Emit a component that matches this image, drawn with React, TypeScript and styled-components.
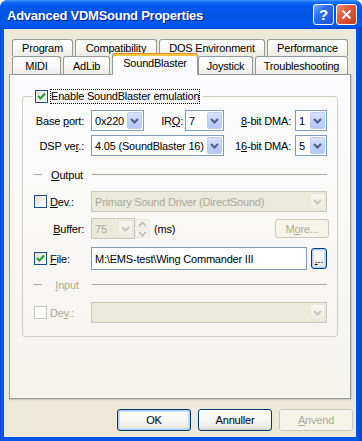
import styled, { createGlobalStyle } from 'styled-components';

const GlobalStyle = createGlobalStyle`
  html, body {
    margin: 0;
    padding: 0;
    background: #ffffff;
  }
  body {
    font-family: "Liberation Sans", Arial, sans-serif;
    font-size: 11px;
    letter-spacing: -0.2px;
    color: #000000;
  }
`;

const backTabs = [
  { label: 'Program', width: 61 },
  { label: 'Compatibility', width: 82 },
  { label: 'DOS Environment', width: 106 },
  { label: 'Performance', width: 81 },
];

const frontTabs = [
  { label: 'MIDI', width: 49 },
  { label: 'AdLib', width: 47 },
  { label: 'SoundBlaster', width: 86, active: true },
  { label: 'Joystick', width: 55 },
  { label: 'Troubleshooting', width: 93 },
];

const Chevron = ({ color, up }: { color: string; up?: boolean }) => (
  <svg width="9" height="6" viewBox="0 0 9 6">
    <polyline
      points={up ? '1,5 4.5,1.5 8,5' : '1,1 4.5,4.5 8,1'}
      fill="none"
      stroke={color}
      strokeWidth="2"
    />
  </svg>
);

const Tick = () => (
  <svg width="9" height="9" viewBox="0 0 9 9">
    <path d="M1 4 L3.5 6.5 L8 1.5" fill="none" stroke="#21A121" strokeWidth="2" />
  </svg>
);

const ComboBox = ({ width, value, disabled }: { width: number; value?: string; disabled?: boolean }) => (
  <Combo $width={width} $disabled={disabled}>
    <ComboText>{value}</ComboText>
    <ComboArrow $disabled={disabled}>
      <Chevron color={disabled ? '#C9C7BA' : '#4D6185'} />
    </ComboArrow>
  </Combo>
);

const Check = ({ checked, disabled }: { checked?: boolean; disabled?: boolean }) => (
  <CheckBox $disabled={disabled}>{checked && <Tick />}</CheckBox>
);

const SectionRule = ({ label, disabled, top }: { label: React.ReactNode; disabled?: boolean; top: number }) => (
  <SeparatorRow $top={top}>
    <Dash />
    <SepLabel $disabled={disabled}>{label}</SepLabel>
    <RuleLine />
  </SeparatorRow>
);

const App = () => {
  return (
    <>
      <GlobalStyle />
      <Window>
        <TitleBar>
          <TitleText>Advanced VDMSound Properties</TitleText>
          <CaptionButtons>
            <CaptionButton $kind="help">?</CaptionButton>
            <CaptionButton $kind="close">
              <svg width="11" height="11" viewBox="0 0 11 11">
                <path d="M1.5 1.5 L9.5 9.5 M9.5 1.5 L1.5 9.5" stroke="#ffffff" strokeWidth="2" />
              </svg>
            </CaptionButton>
          </CaptionButtons>
        </TitleBar>

        <Client>
          <TabStrip>
            <TabRow $height={17}>
              {backTabs.map((t) => (
                <Tab key={t.label} $width={t.width}>
                  {t.label}
                </Tab>
              ))}
            </TabRow>
            <TabRow $height={18}>
              {frontTabs.map((t) => (
                <Tab key={t.label} $width={t.width} $active={t.active}>
                  {t.label}
                </Tab>
              ))}
            </TabRow>
          </TabStrip>

          <Panel>
            <Group>
              <GroupLegend>
                <Check checked />
                <FocusLabel>Enable SoundBlaster emulation</FocusLabel>
              </GroupLegend>
              <GroupBody>
                <Row $top={6} $height={21}>
                  <FieldLabel $width={68} $pad={7}>
                    Base <U>p</U>ort:
                  </FieldLabel>
                  <ComboBox width={53} value="0x220" />
                  <FieldLabel $width={41} $pad={2}>
                    IR<U>Q</U>:
                  </FieldLabel>
                  <ComboBox width={39} value="7" />
                  <FieldLabel $width={71} $pad={4}>
                    <U>8</U>-bit DMA:
                  </FieldLabel>
                  <ComboBox width={32} value="1" />
                </Row>
                <Row $top={4} $height={21}>
                  <FieldLabel $width={68} $pad={7}>
                    DSP ve<U>r</U>.:
                  </FieldLabel>
                  <ComboBox width={133} value="4.05 (SoundBlaster 16)" />
                  <FieldLabel $width={71} $pad={4}>
                    1<U>6</U>-bit DMA:
                  </FieldLabel>
                  <ComboBox width={32} value="5" />
                </Row>

                <SectionRule top={12} label={<><U>O</U>utput</>} />

                <Row $top={10} $height={21}>
                  <CheckCell>
                    <Check />
                    <CheckText>
                      <U>D</U>ev.:
                    </CheckText>
                  </CheckCell>
                  <ComboBox width={236} value="Primary Sound Driver (DirectSound)" disabled />
                </Row>
                <Row $top={6} $height={21}>
                  <FieldLabel $width={68} $pad={7}>
                    <U>B</U>uffer:
                  </FieldLabel>
                  <ComboBox width={44} value="75" disabled />
                  <Spin>
                    <SpinHalf>
                      <Chevron color="#C9C7BA" up />
                    </SpinHalf>
                    <SpinHalf>
                      <Chevron color="#C9C7BA" />
                    </SpinHalf>
                  </Spin>
                  <Unit>(ms)</Unit>
                  <PushButton $variant="disabled" $width={54} $height={19} $push>
                    M<U>o</U>re...
                  </PushButton>
                </Row>
                <Row $top={8} $height={23}>
                  <CheckCell>
                    <Check checked />
                    <CheckText>
                      <U>F</U>ile:
                    </CheckText>
                  </CheckCell>
                  <TextInput>M:\EMS-test\Wing Commander III</TextInput>
                  <PushButton $variant="focus" $width={16} $height={21} $gap={4}>
                    <U>.</U>..
                  </PushButton>
                </Row>

                <SectionRule top={8} disabled label={<><U>I</U>nput</>} />

                <Row $top={11} $height={21}>
                  <CheckCell>
                    <Check disabled />
                    <CheckText $disabled>
                      De<U>v</U>.:
                    </CheckText>
                  </CheckCell>
                  <ComboBox width={236} disabled />
                </Row>
              </GroupBody>
            </Group>
          </Panel>

          <ButtonBar>
            <PushButton $variant="default" $width={74} $height={22}>
              OK
            </PushButton>
            <PushButton $variant="normal" $width={74} $height={22}>
              Annuller
            </PushButton>
            <PushButton $variant="disabled" $width={74} $height={22}>
              <U>A</U>nvend
            </PushButton>
          </ButtonBar>
        </Client>
      </Window>
    </>
  );
};

export default App;

const Window = styled.div`
  width: 362px;
  height: 441px;
  box-sizing: border-box;
  display: flex;
  flex-direction: column;
  background: linear-gradient(to right, #0831d9 0px, #0c5ef0 1px, #0055ea 3px, #0055ea 356px, #0844d4 361px);
  border-radius: 8px 8px 0 0;
  overflow: hidden;
`;

const TitleBar = styled.div`
  height: 29px;
  flex-shrink: 0;
  display: flex;
  align-items: center;
  padding: 2px 5px 0 7px;
  box-sizing: border-box;
  background: linear-gradient(
    to bottom,
    #3d95ff 0%,
    #0a66f5 10%,
    #0058ee 22%,
    #0054e3 55%,
    #005af0 85%,
    #0048d8 100%
  );
`;

const TitleText = styled.div`
  color: #ffffff;
  font-weight: bold;
  font-size: 13px;
  text-shadow: 1px 1px 0 #0a1e8c;
  letter-spacing: -0.25px;
`;

const CaptionButtons = styled.div`
  margin-left: auto;
  display: flex;
  gap: 2px;
  margin-top: -2px;
`;

const CaptionButton = styled.div<{ $kind: 'help' | 'close' }>`
  width: 21px;
  height: 21px;
  box-sizing: border-box;
  border: 1px solid #ffffff;
  border-radius: 3px;
  display: flex;
  align-items: center;
  justify-content: center;
  color: #ffffff;
  font-weight: bold;
  font-size: 15px;
  background: ${(p) =>
    p.$kind === 'close'
      ? 'linear-gradient(135deg, #f09a7e 0%, #e0613f 35%, #c93d1c 100%)'
      : 'linear-gradient(135deg, #7fb0fb 0%, #2f6ff0 35%, #1a50d8 100%)'};
`;

const Client = styled.div`
  flex: 1;
  margin: 0 6px 4px 4px;
  background: #ece9d8;
  padding: 10px 3px 0 5px;
  display: flex;
  flex-direction: column;
`;

const TabStrip = styled.div`
  display: flex;
  flex-direction: column;
  padding-left: 3px;
`;

const TabRow = styled.div<{ $height: number }>`
  display: flex;
  align-items: flex-end;
  gap: 2px;
  height: ${(p) => p.$height}px;
`;

const Tab = styled.div<{ $width: number; $active?: boolean }>`
  width: ${(p) => p.$width}px;
  height: ${(p) => (p.$active ? '22px' : '100%')};
  box-sizing: border-box;
  display: flex;
  align-items: center;
  justify-content: center;
  border: 1px solid #919b9c;
  border-bottom: none;
  border-radius: 3px 3px 0 0;
  white-space: nowrap;
  position: relative;
  ${(p) =>
    p.$active
      ? `
    z-index: 1;
    margin-bottom: -1px;
    margin-right: -2px;
    border-top: 1px solid #e68b2c;
    box-shadow: inset 0 2px 0 #ffc73c;
    background: #fcfcfe;
    padding-bottom: 3px;
  `
      : `
    background: linear-gradient(to bottom, #ffffff 0%, #fcfcfb 40%, #f1f0ea 80%, #ecebe6 100%);
  `}
`;

const Panel = styled.div`
  width: 342px;
  height: 325px;
  box-sizing: border-box;
  border: 1px solid #919b9c;
  background: linear-gradient(to bottom, #fcfcfe 0%, #f4f3ee 100%);
  box-shadow: 1px 1px 0 #d0cdbf, 2px 2px 0 #e2dfd0;
  padding-top: 13px;
`;

const Group = styled.fieldset`
  margin: 0 0 0 12px;
  width: 316px;
  box-sizing: border-box;
  border: 1px solid #d0d0bf;
  border-radius: 3px;
  padding: 0;
  min-width: 0;
`;

const GroupLegend = styled.legend`
  margin-left: 10px;
  padding: 0 2px;
  height: 16px;
  display: flex;
  align-items: center;
  gap: 2px;
`;

const FocusLabel = styled.span`
  border: 1px dotted #000000;
  line-height: 13px;
  white-space: nowrap;
`;

const GroupBody = styled.div`
  display: flex;
  flex-direction: column;
  padding: 6px 8px 13px 0;
`;

const Row = styled.div<{ $top: number; $height: number }>`
  display: flex;
  align-items: center;
  height: ${(p) => p.$height}px;
  margin-top: ${(p) => p.$top}px;
  &:first-child {
    margin-top: 0;
  }
`;

const FieldLabel = styled.div<{ $width: number; $pad: number }>`
  width: ${(p) => p.$width}px;
  padding-right: ${(p) => p.$pad}px;
  box-sizing: border-box;
  text-align: right;
  white-space: nowrap;
  flex-shrink: 0;
`;

const U = styled.span`
  text-decoration: underline;
`;

const Combo = styled.div<{ $width: number; $disabled?: boolean }>`
  width: ${(p) => p.$width}px;
  height: 21px;
  box-sizing: border-box;
  flex-shrink: 0;
  display: flex;
  align-items: stretch;
  border: 1px solid ${(p) => (p.$disabled ? '#c9c7ba' : '#7f9db9')};
  background: ${(p) => (p.$disabled ? '#ebe9db' : '#ffffff')};
  color: ${(p) => (p.$disabled ? '#aca899' : '#000000')};
`;

const ComboText = styled.div`
  flex: 1;
  min-width: 0;
  overflow: hidden;
  white-space: nowrap;
  padding-left: 3px;
  display: flex;
  align-items: center;
`;

const ComboArrow = styled.div<{ $disabled?: boolean }>`
  width: 15px;
  margin: 1px;
  box-sizing: border-box;
  flex-shrink: 0;
  display: flex;
  align-items: center;
  justify-content: center;
  border-radius: 2px;
  border: 1px solid ${(p) => (p.$disabled ? '#e8e6da' : '#bacbf4')};
  background: ${(p) =>
    p.$disabled
      ? 'linear-gradient(to bottom, #f7f6f1, #eceae0)'
      : 'linear-gradient(to bottom, #dbe5fd 0%, #c4d4fb 45%, #b3c8f7 100%)'};
`;

const Spin = styled.div`
  width: 15px;
  height: 21px;
  box-sizing: border-box;
  display: flex;
  flex-direction: column;
  gap: 1px;
  padding: 1px 0;
  flex-shrink: 0;
`;

const SpinHalf = styled.div`
  flex: 1;
  display: flex;
  align-items: center;
  justify-content: center;
  border: 1px solid #e8e6da;
  border-radius: 2px;
  background: #f4f3ee;
`;

const Unit = styled.div`
  margin-left: 4px;
`;

const CheckCell = styled.div`
  width: 68px;
  padding-left: 11px;
  box-sizing: border-box;
  display: flex;
  align-items: center;
  gap: 3px;
  flex-shrink: 0;
`;

const CheckBox = styled.div<{ $disabled?: boolean }>`
  width: 13px;
  height: 13px;
  box-sizing: border-box;
  flex-shrink: 0;
  display: flex;
  align-items: center;
  justify-content: center;
  border: 1px solid ${(p) => (p.$disabled ? '#cac8bb' : '#1c5180')};
  background: ${(p) =>
    p.$disabled ? '#ffffff' : 'linear-gradient(135deg, #dcdcd7 0%, #f4f4f0 60%, #ffffff 100%)'};
`;

const CheckText = styled.span<{ $disabled?: boolean }>`
  color: ${(p) => (p.$disabled ? '#aca899' : '#000000')};
  white-space: nowrap;
`;

const TextInput = styled.div`
  width: 216px;
  height: 23px;
  box-sizing: border-box;
  border: 1px solid #7f9db9;
  background: #ffffff;
  padding-left: 3px;
  display: flex;
  align-items: center;
  white-space: nowrap;
  overflow: hidden;
  flex-shrink: 0;
`;

const SeparatorRow = styled.div<{ $top: number }>`
  display: flex;
  align-items: center;
  height: 13px;
  margin-top: ${(p) => p.$top}px;
  padding-left: 11px;
`;

const Dash = styled.div`
  width: 8px;
  height: 1px;
  background: #aca899;
`;

const SepLabel = styled.div<{ $disabled?: boolean }>`
  width: 50px;
  text-align: center;
  color: ${(p) => (p.$disabled ? '#aca899' : '#000000')};
`;

const RuleLine = styled.div`
  flex: 1;
  height: 1px;
  margin-right: 2px;
  background: #aca899;
`;

const PushButton = styled.div<{
  $variant: 'default' | 'normal' | 'disabled' | 'focus';
  $width: number;
  $height: number;
  $push?: boolean;
  $gap?: number;
}>`
  width: ${(p) => p.$width}px;
  height: ${(p) => p.$height}px;
  box-sizing: border-box;
  flex-shrink: 0;
  display: flex;
  align-items: center;
  justify-content: center;
  border-radius: 3px;
  white-space: nowrap;
  ${(p) => (p.$push ? 'margin-left: auto;' : '')}
  ${(p) => (p.$gap ? `margin-left: ${p.$gap}px;` : '')}
  border: 1px solid ${(p) => (p.$variant === 'disabled' ? '#c9c7ba' : '#003c74')};
  color: ${(p) => (p.$variant === 'disabled' ? '#aca899' : '#000000')};
  background: ${(p) =>
    p.$variant === 'disabled'
      ? '#f5f4ea'
      : 'linear-gradient(to bottom, #ffffff 0%, #f7f7f4 50%, #ecebe6 85%, #d6d0c5 100%)'};
  box-shadow: ${(p) =>
    p.$variant === 'default' || p.$variant === 'focus'
      ? 'inset 0 0 0 1px #b3cbf5, inset 0 0 0 2px #cfe0fa'
      : 'none'};
`;

const ButtonBar = styled.div`
  display: flex;
  justify-content: flex-end;
  gap: 7px;
  margin-top: 10px;
`;
